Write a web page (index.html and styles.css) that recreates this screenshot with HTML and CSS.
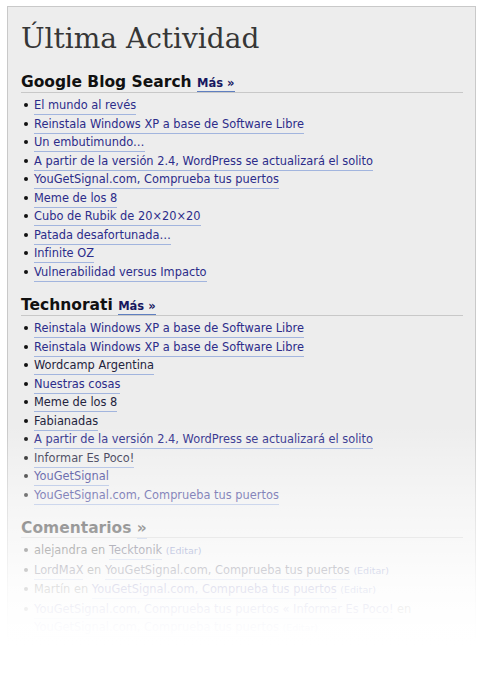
FILE: index.html
```html
<!DOCTYPE html>
<html lang="es">
<head>
<meta charset="utf-8">
<title>Última Actividad</title>
<link rel="stylesheet" href="styles.css">
</head>
<body>
<div class="box">
  <h1 class="title">Última Actividad</h1>

  <h2 class="sec-title">Google Blog Search <a class="more" href="#">Más »</a></h2>
  <ul class="items">
    <li><a href="#">El mundo al revés</a></li>
    <li><a href="#">Reinstala Windows XP a base de Software Libre</a></li>
    <li><a href="#">Un embutimundo…</a></li>
    <li><a href="#">A partir de la versión 2.4, WordPress se actualizará el solito</a></li>
    <li><a href="#">YouGetSignal.com, Comprueba tus puertos</a></li>
    <li><a href="#">Meme de los 8</a></li>
    <li><a href="#">Cubo de Rubik de 20×20×20</a></li>
    <li><a href="#">Patada desafortunada…</a></li>
    <li><a href="#">Infinite OZ</a></li>
    <li><a href="#">Vulnerabilidad versus Impacto</a></li>
  </ul>

  <h2 class="sec-title">Technorati <a class="more" href="#">Más »</a></h2>
  <ul class="items">
    <li><a href="#">Reinstala Windows XP a base de Software Libre</a></li>
    <li><a href="#">Reinstala Windows XP a base de Software Libre</a></li>
    <li><a class="visited" href="#">Wordcamp Argentina</a></li>
    <li><a href="#">Nuestras cosas</a></li>
    <li><a class="visited" href="#">Meme de los 8</a></li>
    <li><a class="visited" href="#">Fabianadas</a></li>
    <li><a href="#">A partir de la versión 2.4, WordPress se actualizará el solito</a></li>
    <li><a class="visited" href="#">Informar Es Poco!</a></li>
    <li><a href="#">YouGetSignal</a></li>
    <li><a href="#">YouGetSignal.com, Comprueba tus puertos</a></li>
  </ul>

  <h2 class="sec-title">Comentarios <a class="arrow" href="#">»</a></h2>
  <ul class="items">
    <li>alejandra en <a class="visited" href="#">Tecktonik</a> <a class="edit" href="#">(Editar)</a></li>
    <li><a class="visited" href="#">LordMaX</a> en <a class="visited" href="#">YouGetSignal.com, Comprueba tus puertos</a> <a class="edit" href="#">(Editar)</a></li>
    <li>Martín en <a href="#">YouGetSignal.com, Comprueba tus puertos</a> <a class="edit" href="#">(Editar)</a></li>
    <li><a href="#">YouGetSignal.com, Comprueba tus puertos « Informar Es Poco!</a> en <a href="#">YouGetSignal.com, Comprueba tus puertos</a> <a class="edit" href="#">(Editar)</a></li>
  </ul>
</div>
<div class="fade"></div>
</body>
</html>
```

FILE: styles.css
```css
html, body {
  background: #ffffff;
}
body {
  margin: 6px 5px 0 7px;
  position: relative;
  min-height: 684px;
  font-family: "DejaVu Sans", Verdana, sans-serif;
  overflow: hidden;
}
.box {
  background: #ededed;
  border: 1px solid #c9c9c9;
  padding: 12px 12px 30px 13px;
}
.title {
  margin: 0;
  font-family: "DejaVu Serif", Georgia, serif;
  font-weight: normal;
  font-size: 28px;
  line-height: 40px;
  color: #363636;
}
.sec-title {
  margin: 15px 0 0 0;
  font-size: 15.5px;
  line-height: 17px;
  font-weight: bold;
  color: #111111;
  border-bottom: 1px solid #c8c8c8;
}
.items + .sec-title {
  margin-top: 16px;
}
.more {
  font-size: 11.5px;
  color: #171760;
  text-decoration: none;
  border-bottom: 1px solid #5f7fc0;
  padding-bottom: 1px;
}
.arrow {
  color: #111111;
  text-decoration: none;
  border-bottom: 1px solid #9fb3dd;
  padding-bottom: 1px;
}
.items {
  margin: 3px 0 0 0;
  padding: 0 0 0 13px;
  list-style: none;
  font-size: 11.4px;
  line-height: 18.5px;
  color: #222222;
}
.items li::before {
  content: "";
  display: inline-block;
  width: 4px;
  height: 4px;
  border-radius: 50%;
  background: #111111;
  margin-left: -10px;
  margin-right: 6px;
  vertical-align: 2px;
}
.items a {
  color: #2c2c8a;
  text-decoration: none;
  border-bottom: 1px solid #a2b5de;
  padding-bottom: 2px;
}
.items a.visited {
  color: #24243e;
}
.items a.edit {
  font-size: 9.5px;
  color: #4a5aa8;
  border-bottom: none;
}
.fade {
  position: absolute;
  top: -6px;
  left: -7px;
  width: 481px;
  height: 690px;
  pointer-events: none;
  background: linear-gradient(to bottom,
    rgba(255,255,255,0) 0px,
    rgba(255,255,255,0) 425px,
    rgba(255,255,255,0.22) 460px,
    rgba(255,255,255,0.42) 495px,
    rgba(255,255,255,0.58) 528px,
    rgba(255,255,255,0.68) 550px,
    rgba(255,255,255,0.79) 570px,
    rgba(255,255,255,0.88) 590px,
    rgba(255,255,255,0.94) 610px,
    rgba(255,255,255,0.98) 628px,
    rgba(255,255,255,1) 645px,
    rgba(255,255,255,1) 690px);
}
```
